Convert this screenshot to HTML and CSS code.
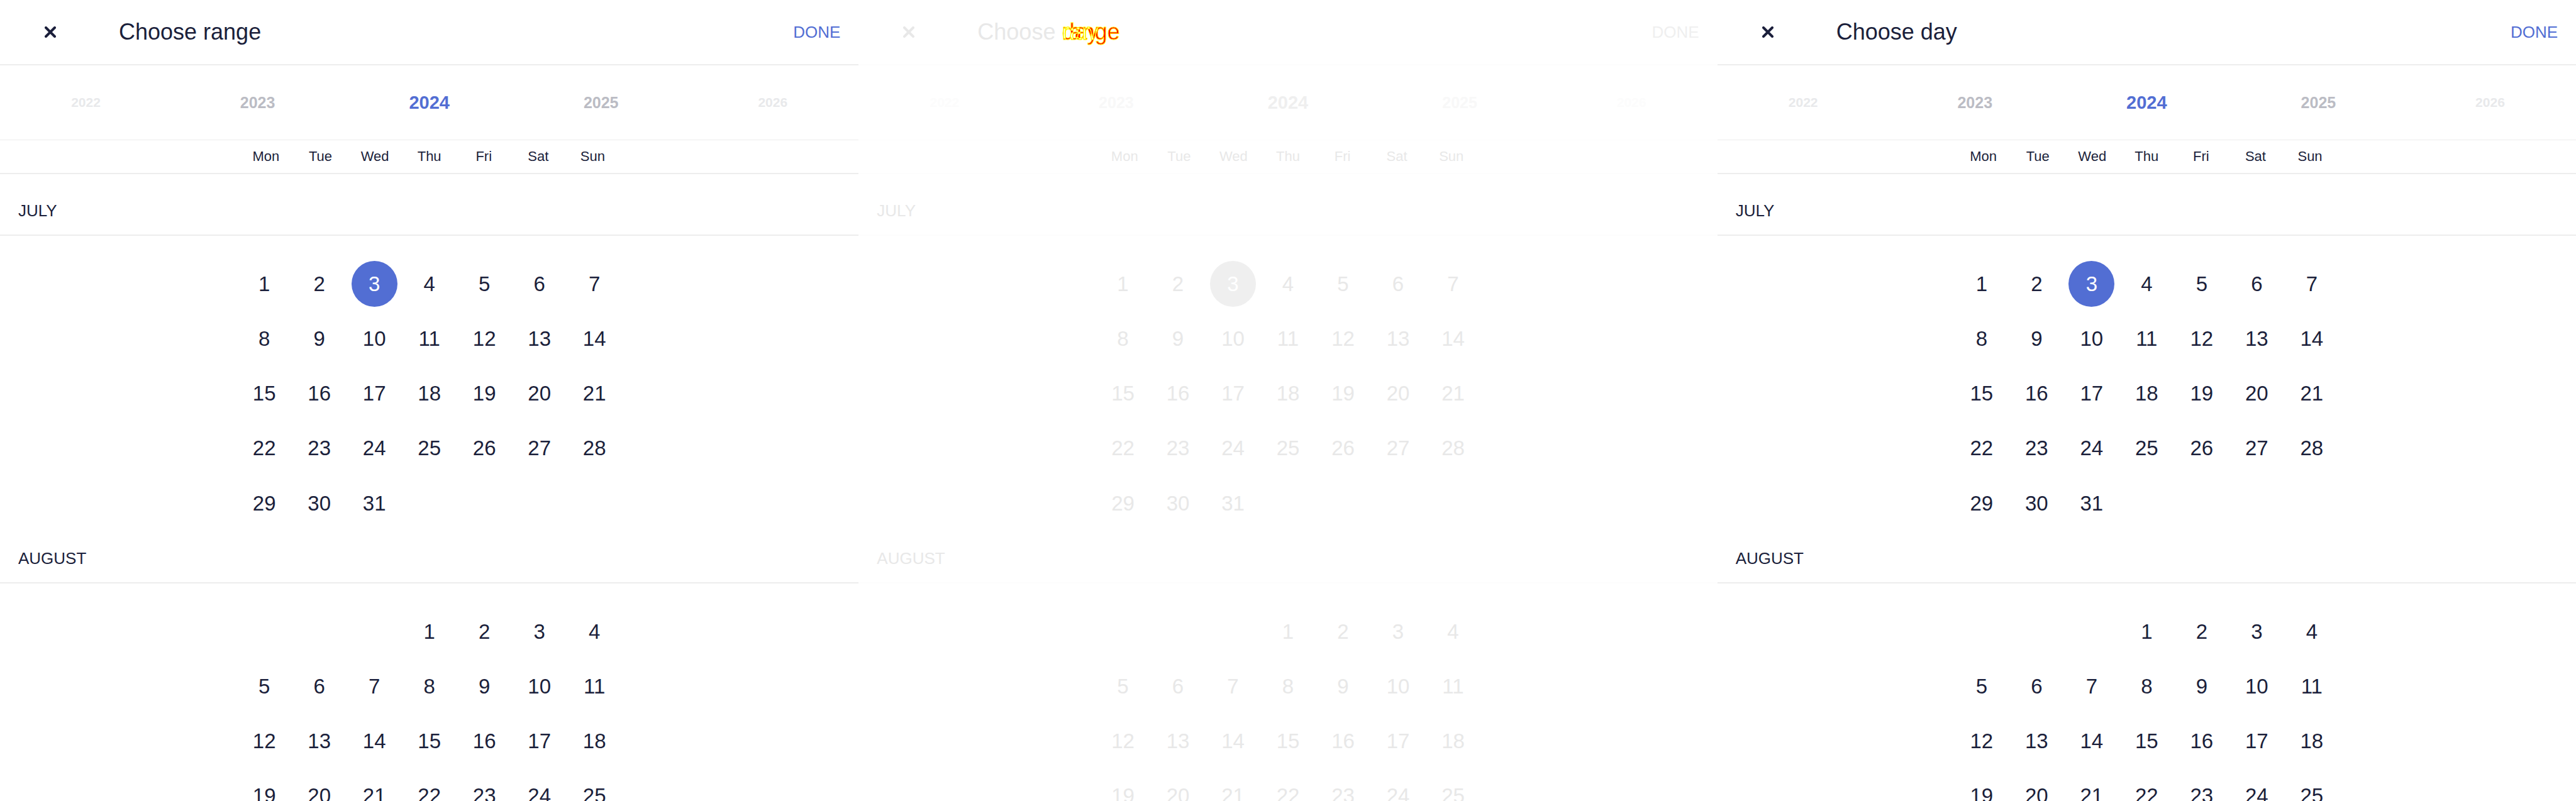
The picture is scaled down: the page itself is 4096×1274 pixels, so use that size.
FILE: index.html
```html
<!DOCTYPE html>
<html lang="en">
<head>
<meta charset="utf-8">
<title>Mobile calendar comparison</title>
<link rel="stylesheet" href="styles.css">
</head>
<body>
<main class="comparison">
  <section class="calendar" aria-label="Choose range">
    <header class="bar">
      <button class="close" type="button" aria-label="Close"><svg class="close-icon" viewBox="0 0 18 18"><path d="M2 2l14 14M16 2L2 16"/></svg></button>
      <h1 class="title">Choose range</h1>
      <button class="done" type="button">DONE</button>
    </header>
  </section>
  <section class="calendar calendar-diff" aria-label="Difference">
    <header class="bar">
      <button class="close" type="button" aria-label="Close"><svg class="close-icon" viewBox="0 0 18 18"><path d="M2 2l14 14M16 2L2 16"/></svg></button>
      <h1 class="title">Choose <span class="changed"><span class="changed-word">range</span><span class="changed-word">day</span></span></h1>
      <button class="done" type="button">DONE</button>
    </header>
  </section>
  <section class="calendar" aria-label="Choose day">
    <header class="bar">
      <button class="close" type="button" aria-label="Close"><svg class="close-icon" viewBox="0 0 18 18"><path d="M2 2l14 14M16 2L2 16"/></svg></button>
      <h1 class="title">Choose day</h1>
      <button class="done" type="button">DONE</button>
    </header>
  </section>
</main>
<script src="calendar.js"></script>
</body>
</html>
```
FILE: styles.css
```css
* {
  box-sizing: border-box;
}

html,
body {
  height: 100%;
}

body {
  margin: 0;
  overflow: hidden;
  background: #fff;
  font-family: "Liberation Sans", Arial, sans-serif;
}

button {
  padding: 0;
  border: 0;
  background: none;
  color: inherit;
  font: inherit;
}

.comparison {
  display: grid;
  grid-template-columns: repeat(3, minmax(0, 1fr));
  height: 100%;
  overflow: hidden;
}

.calendar {
  --text: #1b1f3b;
  --accent: #526ed3;
  --near: #bbbcc4;
  --far: #e8e9eb;
  --line: #ededed;
  color: var(--text);
}

.calendar-diff {
  --text: #e8e8e8;
  --accent: #efefef;
  --near: #f8f8f8;
  --far: #fcfcfc;
  --line: #fdfdfd;
}

.bar {
  display: flex;
  align-items: center;
  height: 104px;
  padding: 0 29px;
  border-bottom: 2px solid var(--line);
}

.close {
  display: flex;
  align-items: center;
  justify-content: center;
  width: 102px;
  height: 102px;
}

.close-icon {
  width: 18px;
  height: 18px;
  fill: none;
  stroke: currentColor;
  stroke-width: 4;
  stroke-linecap: round;
}

.title {
  flex: 1;
  margin: 0;
  padding-left: 58px;
  font-size: 36px;
  font-weight: 400;
  line-height: 44px;
}

/* Both words share one cell. Cyan in difference mode over white turns red
   where only one word has ink and stays light where the two agree. */
.changed {
  display: inline-grid;
  isolation: isolate;
  background: #fff;
}

.changed::before,
.changed::after,
.changed-word {
  grid-area: 1 / 1;
}

.changed-word {
  color: #0ff;
  mix-blend-mode: difference;
}

.changed::before,
.changed::after {
  z-index: 1;
  color: transparent;
  -webkit-text-stroke: 1px #ff0;
}

.changed::before {
  content: "range";
}

.changed::after {
  content: "day";
}

.done {
  color: var(--accent);
  font-size: 26px;
}

.years {
  display: grid;
  grid-template-columns: repeat(5, 1fr);
  height: 119px;
  border-bottom: 1px solid var(--line);
  font-size: 25px;
  font-weight: 700;
}

.year {
  color: var(--near);
}

.year-far {
  color: var(--far);
  font-size: 21px;
}

.year-active {
  color: var(--accent);
  font-size: 29px;
}

.weekdays {
  display: grid;
  grid-template-columns: repeat(7, 1fr);
  align-items: center;
  height: 54px;
  padding: 0 calc(50% - 303px);
  border-bottom: 2px solid var(--line);
  font-size: 22px;
}

.weekday {
  text-align: center;
}

.months {
  display: flex;
  flex-direction: column;
  gap: 14px;
  padding-top: 21px;
}

.month-name {
  margin: 0;
  padding: 0 29px;
  border-bottom: 2px solid var(--line);
  font-size: 26px;
  font-weight: 400;
  line-height: 75px;
}

.days {
  display: grid;
  grid-template-columns: repeat(7, 73px);
  grid-template-rows: repeat(5, 73px);
  justify-content: space-between;
  align-content: space-between;
  width: 598px;
  height: 422px;
  margin: 40px auto 0;
  font-size: 33px;
}

.day {
  border-radius: 50%;
}

.day-first-thu {
  grid-column-start: 4;
}

.day-selected {
  background: var(--accent);
  color: #fff;
}
```
FILE: calendar.js
```
const years = [
  [2022, "year year-far"],
  [2023, "year"],
  [2024, "year year-active"],
  [2025, "year"],
  [2026, "year year-far"],
];
const weekdays = ["Mon", "Tue", "Wed", "Thu", "Fri", "Sat", "Sun"];
const months = [
  { name: "JULY", selected: 3, firstClass: "" },
  { name: "AUGUST", selected: 0, firstClass: " day-first-thu" },
];

function dayButton(month, day) {
  let names = "day";
  if (day === 1) names += month.firstClass;
  if (day === month.selected) names += " day-selected";
  return `<button type="button" class="${names}">${day}</button>`;
}

function monthSection(month) {
  const days = Array.from({ length: 31 }, (_, i) => dayButton(month, i + 1));
  return `<section><h2 class="month-name">${month.name}</h2><div class="days">${days.join("")}</div></section>`;
}

const body = `
  <nav class="years">${years.map(([y, c]) => `<button type="button" class="${c}">${y}</button>`).join("")}</nav>
  <div class="weekdays">${weekdays.map((d) => `<span class="weekday">${d}</span>`).join("")}</div>
  <div class="months">${months.map(monthSection).join("")}</div>`;

document.querySelectorAll(".calendar").forEach((calendar) => {
  calendar.insertAdjacentHTML("beforeend", body);
});
```
